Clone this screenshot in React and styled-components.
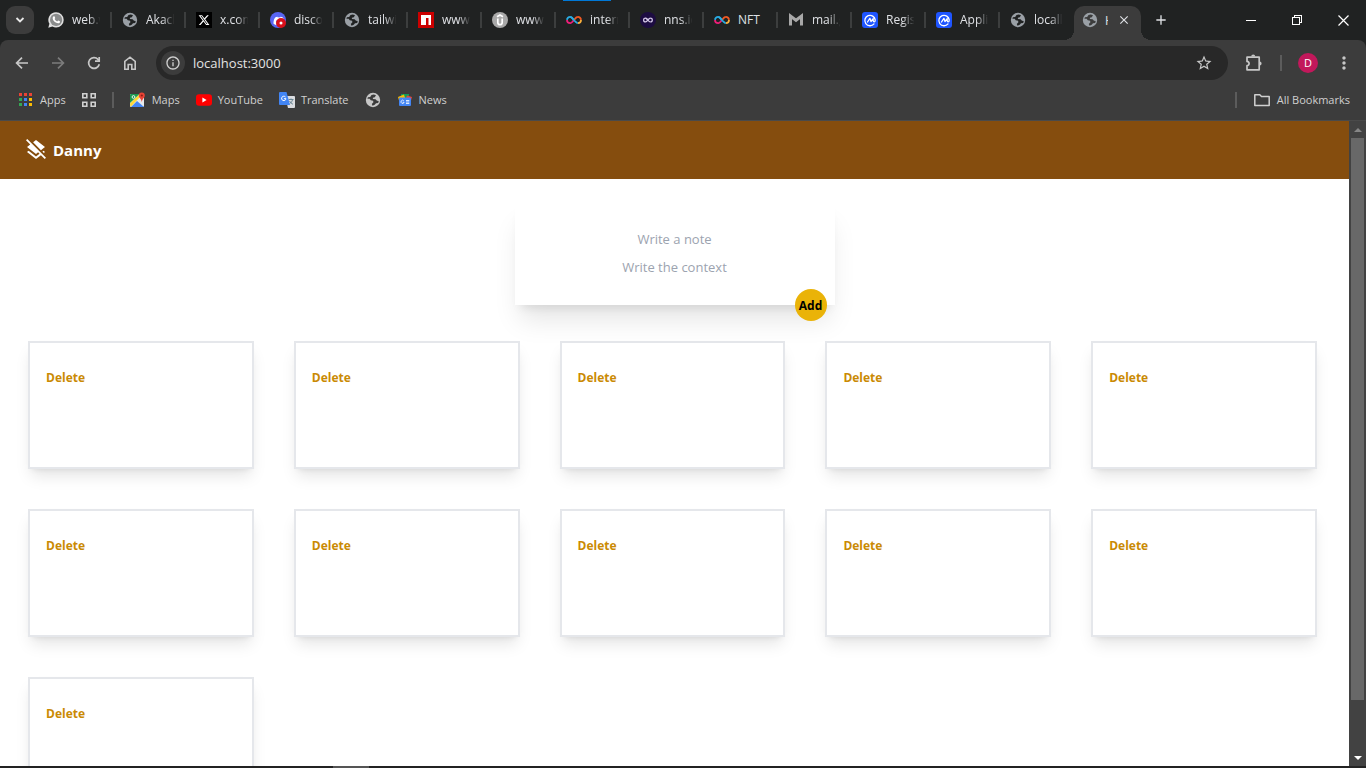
import React from "react";
import styled, { createGlobalStyle } from "styled-components";
import { MdLayersClear, MdStarBorder, MdMoreVert, MdClose, MdAdd, MdInfoOutline } from "react-icons/md";
import { FaXTwitter, FaDiscord } from "react-icons/fa6";

const GlobalStyle = createGlobalStyle`
  *, *::before, *::after { box-sizing: border-box; }
  body { margin: 0; background: #fff; }
  body, button, input { font-family: "Open Sans", "Noto Sans", sans-serif; }
  button { padding: 0; border: 0; background: none; color: inherit; cursor: pointer; }
  svg { display: block; flex: none; }
`;

const Window = styled.div`
  position: relative;
  display: flex;
  flex-direction: column;
  height: 100vh;
  overflow: hidden;
  background: #202222;
`;

/* ---------- tab strip ---------- */
const TabStrip = styled.div`
  display: flex;
  align-items: stretch;
  height: 40px;
  padding-left: 6px;
  color: #dfe1e5;
  font-size: 12px;
`;
const TabSearch = styled.button`
  display: grid;
  place-items: center;
  flex: none;
  align-self: center;
  width: 28px;
  height: 28px;
  margin-right: 4px;
  border-radius: 9px;
  background: #3c3c3c;
`;
const Tab = styled.button`
  position: relative;
  display: flex;
  align-items: center;
  gap: 8px;
  flex: 0 1 74px;
  min-width: 0;
  padding: 0 10px;
  font-size: 12px;
  text-align: left;
  &::after {
    content: "";
    position: absolute;
    right: 0;
    top: 12px;
    width: 2px;
    height: 16px;
    background: ${(p) => (p.$last ? "transparent" : "#3c3e3e")};
  }
`;
const TabTitle = styled.span`
  flex: 1;
  min-width: 0;
  overflow: hidden;
  white-space: nowrap;
  line-height: 20px;
  mask-image: ${(p) => (p.$whole ? "none" : "linear-gradient(to right, #000 55%, transparent 95%)")};
`;
const ActiveTab = styled.div`
  position: relative;
  display: flex;
  align-items: center;
  flex: none;
  width: 67px;
  margin-top: 6px;
  padding: 0 10px 6px 8px;
  border-radius: 10px 10px 0 0;
  background: #3c3c3c;
  &::before, &::after {
    content: "";
    position: absolute;
    bottom: 0;
    width: 10px;
    height: 10px;
  }
  &::before {
    left: -10px;
    background: radial-gradient(circle at 0 0, transparent 10px, #3c3c3c 10px);
  }
  &::after {
    right: -10px;
    background: radial-gradient(circle at 100% 0, transparent 10px, #3c3c3c 10px);
  }
`;
const ActiveTitle = styled.span`
  width: 4px;
  margin: 0 9px 0 7px;
  overflow: hidden;
`;
const NewTab = styled.button`
  display: grid;
  place-items: center;
  width: 40px;
`;
const WindowControls = styled.div`
  display: flex;
  margin-left: auto;
`;
const WindowButton = styled.button`
  display: grid;
  place-items: center;
  width: 46px;
  color: #fff;
`;
const LoadingMark = styled.div`
  position: absolute;
  top: 0;
  left: 563px;
  width: 48px;
  height: 1px;
  background: #0078d7;
`;

/* ---------- toolbar ---------- */
const Chrome = styled.div`
  flex: none;
  border-bottom: 1px solid #4a4a4a;
  border-radius: 8px 8px 0 0;
  background: #3c3c3c;
  color: #c7c7c7;
`;
const Toolbar = styled.div`
  display: flex;
  align-items: center;
  height: 46px;
  padding: 0 4px;
`;
const ToolButton = styled.button`
  display: grid;
  place-items: center;
  width: 36px;
  height: 34px;
  color: ${(p) => (p.$dim ? "#7c7c7c" : "#c7c7c7")};
`;
const AddressBar = styled.div`
  display: flex;
  align-items: center;
  flex: 1;
  height: 34px;
  margin: 0 8px;
  padding: 0 15px 0 5px;
  border-radius: 17px;
  background: #282828;
`;
const SiteInfo = styled.button`
  display: grid;
  place-items: center;
  width: 24px;
  height: 24px;
  border-radius: 50%;
  background: #3c3c3c;
`;
const AddressInput = styled.input`
  flex: 1;
  min-width: 0;
  margin-left: 8px;
  padding: 0;
  border: 0;
  outline: 0;
  background: none;
  color: #e3e3e3;
  font-size: 13px;
  line-height: 20px;
`;
const Divider = styled.span`
  flex: none;
  width: 2px;
  height: 16px;
  background: #5c5c5c;
`;
const ToolDivider = styled(Divider)`
  margin: 0 8px;
`;
const Avatar = styled.span`
  display: grid;
  place-items: center;
  width: 20px;
  height: 20px;
  border-radius: 50%;
  background: #c2185b;
  color: #fff;
  font-size: 11px;
  line-height: 20px;
`;

/* ---------- bookmarks ---------- */
const Bookmarks = styled.nav`
  display: flex;
  align-items: center;
  gap: 16px;
  height: 34px;
  padding: 0 16px 6px 18px;
  font-size: 11px;
`;
const Bookmark = styled.a`
  display: flex;
  align-items: center;
  gap: 6px;
  color: #d0d0d0;
  text-decoration: none;
  line-height: 20px;
  white-space: nowrap;
`;
const Spacer = styled.span`
  flex: 1;
`;

/* ---------- page ---------- */
const Viewport = styled.div`
  display: flex;
  flex: 1;
  min-height: 0;
`;
const Page = styled.div`
  flex: 1;
  min-width: 0;
  overflow-y: auto;
  scrollbar-width: none;
  background: #fff;
`;
const Header = styled.header`
  display: flex;
  align-items: center;
  gap: 5px;
  height: 58px;
  padding: 0 24px;
  background: #854d0e;
  color: #fff;
`;
const Brand = styled.h1`
  margin: 0;
  font-size: 15px;
  font-weight: 700;
  line-height: 22px;
`;
const NoteForm = styled.form`
  position: relative;
  display: flex;
  flex-direction: column;
  width: 320px;
  margin: 22px auto 36px;
  padding: 24px;
  background: #fff;
  box-shadow: 0 20px 25px -5px rgba(0, 0, 0, 0.1), 0 8px 10px -6px rgba(0, 0, 0, 0.1);
`;
const Field = styled.input`
  height: 28px;
  padding: 0;
  border: 0;
  outline: 0;
  background: none;
  color: #111;
  font-size: 13px;
  text-align: center;
  &::placeholder { color: #9ca3af; opacity: 1; }
`;
const AddButton = styled.button`
  position: absolute;
  right: 8px;
  bottom: -16px;
  width: 32px;
  height: 32px;
  border-radius: 50%;
  background: #eab308;
  color: #000;
  font-size: 12px;
  font-weight: 700;
`;
const Notes = styled.main`
  display: grid;
  grid-template-columns: repeat(5, 1fr);
  gap: 40px;
  padding: 0 32px 40px 28px;
`;
const Note = styled.article`
  min-height: 128px;
  padding: 24px 16px;
  border: 2px solid #e5e7eb;
  background: #fff;
  box-shadow: 0 10px 15px -3px rgba(0, 0, 0, 0.1), 0 4px 6px -4px rgba(0, 0, 0, 0.1);
`;
const DeleteButton = styled.button`
  display: block;
  color: #ca8a04;
  font-size: 12px;
  font-weight: 700;
  line-height: 22px;
`;

/* ---------- scrollbar ---------- */
const ScrollBar = styled.div`
  display: flex;
  flex-direction: column;
  flex: none;
  width: 17px;
  background: #424242;
`;
const ScrollArrow = styled.button`
  display: grid;
  place-items: center;
  height: 17px;
  color: ${(p) => (p.$dim ? "#868686" : "#fff")};
`;
const ScrollTrack = styled.div`
  flex: 1;
  padding: 0 2px;
`;
const ScrollThumb = styled.div`
  height: 92%;
  background: #686868;
`;
const TaskbarEdge = styled.div`
  flex: none;
  height: 2px;
  background: linear-gradient(to right, #232323 333px, #555 333px, #555 369px, #232323 369px);
`;

/* ---------- icons ---------- */
const Globe = ({ color = "#9aa0a6", cut = "#202222" }) => (
  <svg width="16" height="16" viewBox="0 0 16 16" aria-hidden="true">
    <circle cx="8" cy="8" r="7.2" fill={color} />
    <path d="M8.800 2.600 11 3.200l-1.200 2-1.900.5v1.200l2.700.4 1.400 1.500 1.700.1-.5 2-2.200.4-1.300 1.500-2.200.9-.7-1.700 1.600-1.700-.3-1.500-2.400-.6-1-1.400H2.400l.5-1.600 2.300-.3 1.300-2z" fill={cut} />
  </svg>
);
const WhatsappIcon = () => (
  <svg width="16" height="16" viewBox="0 0 16 16" aria-hidden="true">
    <path d="M8.100.3a7.600 7.600 0 0 1 0 15.200 8 8 0 0 1-3.700-.9L.3 15.700l1.100-4A7.600 7.600 0 0 1 8.100.3z" fill="#e0e0e0" />
    <circle cx="8.100" cy="7.900" r="6.100" fill="#8a8c8c" />
    <path d="M5.600 4.300c.4-.3.800-.2 1 .2l.6 1.400c.1.400-.5.800-.6 1.100.6 1.200 1.400 1.900 2.600 2.400.4-.1.700-1 1.100-.9l1.500.8c.4.200.2 1-.1 1.400-.9.900-2.300.8-3.900-.1C6 9.600 4.900 8 4.700 6.500c-.1-.9.300-1.700.9-2.200z" fill="#fff" />
  </svg>
);
const XIcon = () => (
  <svg width="16" height="16" viewBox="0 0 16 16" aria-hidden="true">
    <rect width="16" height="16" fill="#000" />
    <FaXTwitter x="2" y="2" width="12" height="12" color="#fff" />
  </svg>
);
const DiscordIcon = () => (
  <svg width="16" height="16" viewBox="0 0 16 16" aria-hidden="true">
    <circle cx="8" cy="8" r="8" fill="#5865f2" />
    <FaDiscord x="3" y="3" width="10" height="10" color="#fff" />
    <circle cx="11" cy="11" r="5" fill="#d8101b" />
    <circle cx="11" cy="11" r="1.500" fill="#fff" />
  </svg>
);
const NpmIcon = () => (
  <svg width="16" height="16" viewBox="0 0 16 16" aria-hidden="true">
    <path fill="#cb0000" d="M0 0h16v16H0z" />
    <path fill="#fff" d="M3 3h10v10h-2.500V6H8v7H3z" />
  </svg>
);
const UdemyIcon = () => (
  <svg width="16" height="16" viewBox="0 0 16 16" aria-hidden="true">
    <circle cx="8" cy="8" r="8" fill="#a9a9a9" />
    <path d="M5 4.800 8 3l3 1.800M5.800 6.600v3.800c0 3 4.400 3 4.400 0V6.600" fill="none" stroke="#fff" strokeWidth="1.700" />
  </svg>
);
const InfinityIcon = ({ small }) => (
  <svg width="16" height="16" viewBox="0 0 16 16" aria-hidden="true">
    {small && <circle cx="8" cy="8" r="8" fill="#1d0c42" />}
    <g fill="none" strokeWidth={small ? 2 : 1.8} transform={small ? "translate(3 3) scale(.62)" : undefined}>
      <path d="M8 8C6.500 6 5.500 4.900 4.200 4.900a3.100 3.100 0 0 0-3.200 3" stroke={small ? "#d4c8e8" : "#29abe2"} />
      <path d="M1 7.900c0 1.800 1.400 3.200 3.200 3.200C5.500 11.100 6.500 10 8 8" stroke={small ? "#d4c8e8" : "#ed1e79"} />
      <path d="M8 8c1.500-2 2.500-3.100 3.800-3.100A3.100 3.100 0 0 1 15 7.900" stroke={small ? "#d4c8e8" : "#f15a24"} />
      <path d="M15 7.900c0 1.800-1.400 3.200-3.200 3.200" stroke={small ? "#d4c8e8" : "#fbb03b"} />
      <path d="M4.200 4.900C6.500 4.900 9 11.100 11.800 11.100" stroke={small ? "#d4c8e8" : "#29abe2"} />
    </g>
  </svg>
);
const GmailIcon = () => (
  <svg width="16" height="16" viewBox="0 0 16 16" aria-hidden="true">
    <path d="M2.500 13.500V4L8 8.300 13.500 4v9.500" fill="none" stroke="#a8a8a8" strokeWidth="3" />
  </svg>
);
const CoinIcon = () => (
  <svg width="16" height="16" viewBox="0 0 16 16" aria-hidden="true">
    <rect width="16" height="16" rx="3" fill="#1f55ff" />
    <path d="M12 11.900a5.200 5.200 0 1 1 1.200-4c0 1.300-.3 2-1 2-.8 0-1-.7-1-1.600V6.600L9 9.500 7.900 6.300 5.500 10" fill="none" stroke="#fff" strokeWidth="1.300" strokeLinejoin="round" strokeLinecap="round" />
  </svg>
);
const ArrowIcon = ({ flip }) => (
  <svg width="16" height="16" viewBox="0 0 16 16" fill="none" stroke="currentColor" strokeWidth="1.700" aria-hidden="true">
    <path d={flip ? "M2 8h11M8 2.600 13.400 8 8 13.400" : "M14 8H3M8 2.600 2.600 8 8 13.400"} />
  </svg>
);
const ReloadIcon = () => (
  <svg width="16" height="16" viewBox="0 0 16 16" fill="none" stroke="currentColor" strokeWidth="1.700" aria-hidden="true">
    <path d="M13.300 9.300A5.400 5.400 0 1 1 12 4.300l1 1" />
    <path d="M13.200 2v4.200H9" />
  </svg>
);
const HomeIcon = () => (
  <svg width="16" height="16" viewBox="0 0 16 16" fill="none" stroke="currentColor" strokeWidth="1.600" aria-hidden="true">
    <path d="M2.800 6.300 8 2.200l5.200 4.100v7.900H9.800V9.500H6.200v4.700H2.800z" />
  </svg>
);
const PuzzleIcon = () => (
  <svg width="18" height="18" viewBox="0 0 18 18" fill="none" stroke="currentColor" strokeWidth="1.700" strokeLinejoin="round" aria-hidden="true">
    <path d="M2 3.200h12.200v12.600H2v-4.100c2.800 0 2.800-4.300 0-4.300z" />
    <path d="M6.200 2.600a2 2 0 0 1 4 0zM14.600 7.500a2 2 0 0 1 0 4z" fill="currentColor" stroke="none" />
  </svg>
);
const appColors = ["#ea4335", "#ea4335", "#ea4335", "#34a853", "#4285f4", "#fbbc04", "#34a853", "#4285f4", "#fbbc04"];
const AppsIcon = () => (
  <svg width="16" height="16" viewBox="0 0 16 16" shapeRendering="crispEdges" aria-hidden="true">
    {appColors.map((c, i) => (
      <rect key={i} x={1 + (i % 3) * 5} y={1 + Math.floor(i / 3) * 5} width="3" height="3" fill={c} />
    ))}
  </svg>
);
const GridIcon = () => (
  <svg width="14" height="14" viewBox="1 1 14 14" fill="none" stroke="currentColor" strokeWidth="1.600" aria-hidden="true">
    <path d="M1.800 1.800h4v4h-4zM10.200 1.800h4v4h-4zM1.800 10.200h4v4h-4zM10.200 10.200h4v4h-4z" />
  </svg>
);
const MapsIcon = () => (
  <svg width="16" height="16" viewBox="0 0 16 16" aria-hidden="true">
    <rect x="0" y="2" width="14" height="13" rx="1" fill="#e8eaed" />
    <path d="m1 15 6-6 7 6z" fill="#4285f4" />
    <path d="M0 11.500 9.500 2l1.500 2L.5 15z" fill="#fdd835" />
    <path d="M0 3a1 1 0 0 1 1-1h8.500L0 11z" fill="#1a9850" />
    <circle cx="3.500" cy="5" r="1.400" fill="none" stroke="#fff" strokeWidth=".9" />
    <path d="M11.800.5a3 3 0 0 1 3 3c0 2.400-2.400 2.800-3 6.500-.6-3.700-3-4.100-3-6.500a3 3 0 0 1 3-3z" fill="#ea4335" />
    <circle cx="11.800" cy="3.500" r="1.100" fill="#8c1d18" />
  </svg>
);
const YoutubeIcon = () => (
  <svg width="16" height="16" viewBox="0 0 16 16" aria-hidden="true">
    <rect x="0" y="2.300" width="16" height="11.400" rx="3" fill="#f00" />
    <path d="m6.400 5.600 4.200 2.400-4.200 2.400z" fill="#fff" />
  </svg>
);
const TranslateIcon = () => (
  <svg width="16" height="16" viewBox="0 0 16 16" aria-hidden="true">
    <path d="M6 4h9a1 1 0 0 1 1 1v10a1 1 0 0 1-1 1H9z" fill="#dadce0" />
    <path d="M9.500 7.500h5M12 6.500v1M13.500 7.800c-.5 2-1.500 3-3 4M10.500 9c.7 1.500 2 2.500 3.500 3.300" fill="none" stroke="#607d8b" strokeWidth=".9" />
    <path d="M1 0h6.500L11 13H1a1 1 0 0 1-1-1V1a1 1 0 0 1 1-1z" fill="#4285f4" />
    <path d="M6.500 5A2.200 2.200 0 1 0 7 6.700H4.900" fill="none" stroke="#fff" strokeWidth="1" />
  </svg>
);
const NewsIcon = () => (
  <svg width="16" height="16" viewBox="0 0 16 16" aria-hidden="true">
    <path d="M4 2h8v6H4z" fill="#0f9d58" />
    <path d="m1 5 6-2.500L9 9l-6 3z" fill="#fbbc04" />
    <path d="m15 5-5-1.500L8 9l5 3z" fill="#ea4335" />
    <rect x="2" y="5.500" width="12" height="8.500" rx="1" fill="#4285f4" />
    <path d="M6.800 8.800a1.600 1.600 0 1 0 .3 1.500H5.700M9 8.500h3.300M9 10h3.300M9 11.500h3.300" fill="none" stroke="#fff" strokeWidth=".8" />
  </svg>
);
const FolderIcon = () => (
  <svg width="18" height="16" viewBox="0 0 18 16" fill="none" stroke="currentColor" strokeWidth="1.500" strokeLinejoin="round" aria-hidden="true">
    <path d="M1.800 2.800h5l1.700 1.700h7.700v9H1.800z" />
  </svg>
);

const tabs = [
  { title: "web.w", icon: <WhatsappIcon /> },
  { title: "Akacl", icon: <Globe /> },
  { title: "x.com", icon: <XIcon /> },
  { title: "disco", icon: <DiscordIcon /> },
  { title: "tailwi", icon: <Globe /> },
  { title: "www.", icon: <NpmIcon /> },
  { title: "www.", icon: <UdemyIcon /> },
  { title: "intern", icon: <InfinityIcon /> },
  { title: "nns.ic", icon: <InfinityIcon small /> },
  { title: "NFT", icon: <InfinityIcon />, whole: true },
  { title: "mail.g", icon: <GmailIcon /> },
  { title: "Regis", icon: <CoinIcon /> },
  { title: "Appli", icon: <CoinIcon /> },
  { title: "locall", icon: <Globe />, last: true },
];

export default function App() {
  return (
    <Window>
      <GlobalStyle />
      <TabStrip>
        <TabSearch aria-label="Search tabs">
          <svg width="10" height="10" viewBox="0 0 10 10" fill="none" stroke="#e8e8e8" strokeWidth="1.800" aria-hidden="true">
            <path d="m1.500 3 3.500 3.500L8.500 3" />
          </svg>
        </TabSearch>
        {tabs.map((t, i) => (
          <Tab key={i} $last={t.last}>
            {t.icon}
            <TabTitle $whole={t.whole}>{t.title}</TabTitle>
          </Tab>
        ))}
        <ActiveTab>
          <Globe cut="#3c3c3c" />
          <ActiveTitle>H</ActiveTitle>
          <button aria-label="Close tab"><MdClose size={14} /></button>
        </ActiveTab>
        <NewTab aria-label="New tab"><MdAdd size={16} /></NewTab>
        <WindowControls>
          <WindowButton aria-label="Minimize">
            <svg width="10" height="10" viewBox="0 0 10 10" shapeRendering="crispEdges"><path d="M0 5h10v1H0z" fill="currentColor" /></svg>
          </WindowButton>
          <WindowButton aria-label="Restore">
            <svg width="11" height="11" viewBox="0 0 11 11" fill="none" stroke="currentColor" shapeRendering="crispEdges"><path d="M.5 2.500h7v7h-7zM2.500 2.500v-2h7v7h-2" /></svg>
          </WindowButton>
          <WindowButton aria-label="Close">
            <svg width="11" height="11" viewBox="0 0 11 11" fill="none" stroke="currentColor" strokeWidth="1.200"><path d="m.5.5 10 10M10.500.5l-10 10" /></svg>
          </WindowButton>
        </WindowControls>
      </TabStrip>
      <LoadingMark />

      <Chrome>
        <Toolbar>
          <ToolButton aria-label="Back"><ArrowIcon /></ToolButton>
          <ToolButton aria-label="Forward" $dim><ArrowIcon flip /></ToolButton>
          <ToolButton aria-label="Reload"><ReloadIcon /></ToolButton>
          <ToolButton aria-label="Home"><HomeIcon /></ToolButton>
          <AddressBar>
            <SiteInfo aria-label="Site information"><MdInfoOutline size={16} color="#d0d0d0" /></SiteInfo>
            <AddressInput aria-label="Address" defaultValue="localhost:3000" />
            <button aria-label="Bookmark this page"><MdStarBorder size={18} color="#c7c7c7" /></button>
          </AddressBar>
          <ToolButton aria-label="Extensions"><PuzzleIcon /></ToolButton>
          <ToolDivider />
          <ToolButton aria-label="Profile"><Avatar>D</Avatar></ToolButton>
          <ToolButton aria-label="Menu"><MdMoreVert size={20} /></ToolButton>
        </Toolbar>
        <Bookmarks aria-label="Bookmarks">
          <Bookmark href="#apps"><AppsIcon />Apps</Bookmark>
          <Bookmark href="#groups" aria-label="Tab groups"><GridIcon /></Bookmark>
          <Divider />
          <Bookmark href="#maps"><MapsIcon />Maps</Bookmark>
          <Bookmark href="#youtube"><YoutubeIcon />YouTube</Bookmark>
          <Bookmark href="#translate"><TranslateIcon />Translate</Bookmark>
          <Bookmark href="#site" aria-label="Site"><Globe color="#c7c7c7" cut="#3c3c3c" /></Bookmark>
          <Bookmark href="#news"><NewsIcon />News</Bookmark>
          <Spacer />
          <Divider />
          <Bookmark href="#all"><FolderIcon />All Bookmarks</Bookmark>
        </Bookmarks>
      </Chrome>

      <Viewport>
        <Page>
          <Header>
            <MdLayersClear size={24} />
            <Brand>Danny</Brand>
          </Header>
          <NoteForm onSubmit={(e) => e.preventDefault()}>
            <Field aria-label="Note title" placeholder="Write a note" />
            <Field aria-label="Note context" placeholder="Write the context" />
            <AddButton type="submit">Add</AddButton>
          </NoteForm>
          <Notes>
            {Array.from({ length: 11 }, (_, i) => (
              <Note key={i}>
                <DeleteButton>Delete</DeleteButton>
              </Note>
            ))}
          </Notes>
        </Page>
        <ScrollBar>
          <ScrollArrow $dim aria-label="Scroll up">
            <svg width="8" height="4" viewBox="0 0 8 4"><path d="M4 0l4 4H0z" fill="currentColor" /></svg>
          </ScrollArrow>
          <ScrollTrack><ScrollThumb /></ScrollTrack>
          <ScrollArrow aria-label="Scroll down">
            <svg width="8" height="4" viewBox="0 0 8 4"><path d="M0 0h8L4 4z" fill="currentColor" /></svg>
          </ScrollArrow>
        </ScrollBar>
      </Viewport>
      <TaskbarEdge />
    </Window>
  );
}
